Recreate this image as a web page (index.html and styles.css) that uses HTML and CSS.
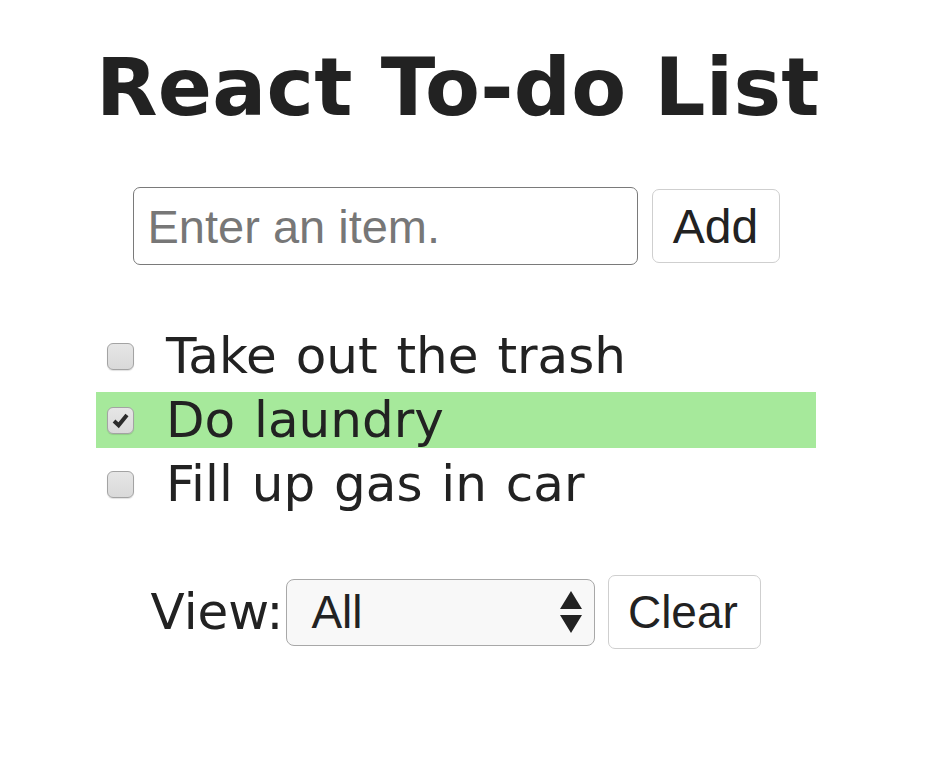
FILE: index.html
```html
<!DOCTYPE html>
<html lang="en">
<head>
<meta charset="utf-8">
<title>React To-do List</title>
<link rel="stylesheet" href="styles.css">
</head>
<body>
<div class="app">
  <h1 class="title">React To-do List</h1>
  <form class="add-row">
    <input class="item-input" type="text" placeholder="Enter an item.">
    <button class="btn btn-add" type="button">Add</button>
  </form>
  <ul class="todo-list">
    <li class="todo">
      <span class="check"></span>
      <span class="todo-text">Take out the trash</span>
    </li>
    <li class="todo done">
      <span class="check checked">
        <svg class="tick" viewBox="0 0 20 20" width="20" height="20"><path d="M3.2 10.6 L8 15 L16.8 4.2" fill="none" stroke="#2b2b2b" stroke-width="4.2" stroke-linejoin="miter" stroke-linecap="butt"/></svg>
      </span>
      <span class="todo-text">Do laundry</span>
    </li>
    <li class="todo">
      <span class="check"></span>
      <span class="todo-text">Fill up gas in car</span>
    </li>
  </ul>
  <div class="view-row">
    <label class="view-label" for="view">View:</label>
    <div class="select-wrap">
      <select id="view" class="view-select">
        <option>All</option>
        <option>Active</option>
        <option>Completed</option>
      </select>
      <svg class="arrows" viewBox="0 0 24 46" width="24" height="46"><path d="M12 2 L23 20 L1 20 Z M1 26 L23 26 L12 44 Z" fill="#222"/></svg>
    </div>
    <button class="btn btn-clear" type="button">Clear</button>
  </div>
</div>
</body>
</html>
```
FILE: styles.css
```css
html, body {
  margin: 0;
  padding: 0;
  background: #ffffff;
}

.app {
  width: 720px;
  margin-left: 96px;
  padding-top: 41px;
  color: #222222;
}

.title {
  margin: 0;
  font-family: "DejaVu Sans", sans-serif;
  font-weight: bold;
  font-size: 80px;
  line-height: 93px;
  letter-spacing: 0.25px;
  white-space: nowrap;
  text-align: center;
  color: #222222;
}

.add-row {
  display: flex;
  justify-content: center;
  align-items: center;
  gap: 14px;
  margin: 53px 0 0 0;
  height: 78px;
}

.item-input {
  box-sizing: border-box;
  width: 505px;
  height: 78px;
  margin: 0;
  padding: 0 14px;
  border: 1.5px solid #7a7a7a;
  border-radius: 7px;
  font-family: "Liberation Sans", Arial, sans-serif;
  font-size: 47px;
  color: #222;
  outline: none;
}

.item-input::placeholder {
  color: #777777;
}

.btn {
  box-sizing: border-box;
  margin: 0;
  padding: 0;
  background: #ffffff;
  border: 1.5px solid #cfcfcf;
  border-radius: 7px;
  font-family: "Liberation Sans", Arial, sans-serif;
  font-size: 48px;
  color: #222222;
  height: 74px;
}

.btn-add {
  width: 128px;
}

.btn-clear {
  width: 153px;
  font-size: 46px;
  padding-right: 4px;
}

.todo-list {
  list-style: none;
  margin: 63px 0 0 0;
  padding: 0;
}

.todo {
  display: flex;
  align-items: center;
  height: 56px;
  margin-bottom: 8px;
  font-family: "DejaVu Sans", sans-serif;
  font-size: 50px;
  word-spacing: 3px;
  color: #222222;
}

.todo.done {
  background: #a6e99b;
}

.check {
  box-sizing: border-box;
  display: flex;
  align-items: center;
  justify-content: center;
  width: 27px;
  height: 27px;
  margin-left: 11px;
  margin-right: 32px;
  border: 1.5px solid #a3a3a3;
  border-radius: 6px;
  background: linear-gradient(#e6e6e6, #d9d9d9);
  box-shadow: 0 1px 1px rgba(0, 0, 0, 0.12);
}

.tick {
  display: block;
  width: 19px;
  height: 19px;
}

.todo-text {
  line-height: 56px;
  white-space: nowrap;
}

.view-row {
  display: flex;
  justify-content: center;
  align-items: center;
  margin-top: 63px;
  height: 74px;
}

.view-label {
  font-family: "DejaVu Sans", sans-serif;
  font-size: 50px;
  color: #222222;
  margin-right: 3px;
}

.select-wrap {
  position: relative;
  margin-right: 13px;
}

.view-select {
  display: block;
  box-sizing: border-box;
  width: 309px;
  height: 67px;
  margin: 0;
  padding: 0 0 0 24px;
  -webkit-appearance: none;
  appearance: none;
  background: #f8f8f8;
  border: 1.5px solid #a8a8a8;
  border-radius: 8px;
  font-family: "Liberation Sans", Arial, sans-serif;
  font-size: 46px;
  color: #222222;
  outline: none;
}

.arrows {
  position: absolute;
  right: 12px;
  top: 10px;
  pointer-events: none;
}
```
